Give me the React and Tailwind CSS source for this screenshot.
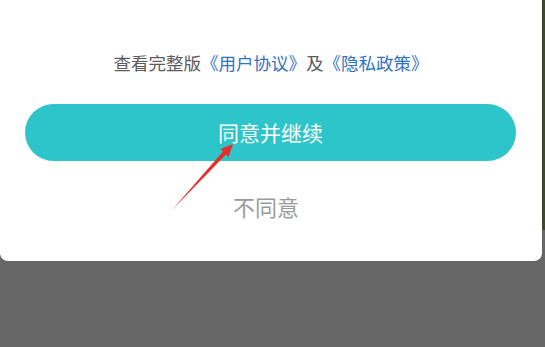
import React from 'react';

// Red annotation arrow drawn over the dialog
const Arrow = () => (
  <svg className="absolute left-0 top-0 pointer-events-none" width="545" height="347" viewBox="0 0 545 347">
    <polygon points="172,210 223.2,151.2 226.3,154.3" fill="#e3302b" />
    <polygon points="233,144 220.5,149 228.5,157" fill="#e3302b" />
  </svg>
);

const App = () => {
  return (
    <div
      className="relative w-[545px] h-[347px] bg-[#666666] overflow-hidden"
      style={{ fontFamily: '"Noto Sans CJK SC", "Noto Sans", sans-serif' }}
    >
      <div className="flex items-start">
        {/* Dialog card */}
        <div className="w-[542px] h-[261px] bg-white rounded-b-[8px] flex flex-col items-center">
          <p className="mt-[51px] text-[17.5px] leading-[24px] text-[#5b5b5b]">
            查看完整版<span className="text-[#2f72c4]">《用户协议》</span>及<span className="text-[#2f72c4]">《隐私政策》</span>
          </p>
          <button className="mt-[29px] w-[491px] h-[57px] ml-[-1px] rounded-full bg-[#2ec5ca] text-white text-[21px] leading-none flex items-center justify-center">
            同意并继续
          </button>
          <button className="mt-[30px] text-[22px] leading-[30px] text-[#9b9b9b] ml-[-10px]">
            不同意
          </button>
        </div>
        {/* Background peeking on the right edge */}
        <div className="w-[3px] h-[230px] bg-[#3c4a2c]" />
      </div>
      <Arrow />
    </div>
  );
};

export default App;
